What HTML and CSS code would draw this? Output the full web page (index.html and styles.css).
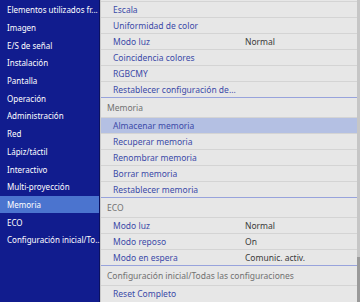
FILE: index.html
```html
<!DOCTYPE html>
<html lang="es">
<head>
<meta charset="utf-8">
<title>Menú</title>
<link rel="stylesheet" href="styles.css">
</head>
<body>
<div class="screen">
  <nav class="sidebar">
    <div class="nav-item">Elementos utilizados fr...</div>
    <div class="nav-item">Imagen</div>
    <div class="nav-item">E/S de señal</div>
    <div class="nav-item">Instalación</div>
    <div class="nav-item">Pantalla</div>
    <div class="nav-item">Operación</div>
    <div class="nav-item">Administración</div>
    <div class="nav-item">Red</div>
    <div class="nav-item">Lápiz/táctil</div>
    <div class="nav-item">Interactivo</div>
    <div class="nav-item">Multi-proyección</div>
    <div class="nav-item active">Memoria</div>
    <div class="nav-item">ECO</div>
    <div class="nav-item">Configuración inicial/To...</div>
  </nav>
  <main class="panel">
    <div class="row"><span class="label">Escala</span></div>
    <div class="row"><span class="label">Uniformidad de color</span></div>
    <div class="row"><span class="label">Modo luz</span><span class="value">Normal</span></div>
    <div class="row"><span class="label">Coincidencia colores</span></div>
    <div class="row"><span class="label">RGBCMY</span></div>
    <div class="row"><span class="label">Restablecer configuración de...</span></div>
    <div class="head">Memoria</div>
    <div class="row selected"><span class="label">Almacenar memoria</span></div>
    <div class="row"><span class="label">Recuperar memoria</span></div>
    <div class="row"><span class="label">Renombrar memoria</span></div>
    <div class="row"><span class="label">Borrar memoria</span></div>
    <div class="row"><span class="label">Restablecer memoria</span></div>
    <div class="head">ECO</div>
    <div class="row"><span class="label">Modo luz</span><span class="value">Normal</span></div>
    <div class="row"><span class="label">Modo reposo</span><span class="value">On</span></div>
    <div class="row"><span class="label">Modo en espera</span><span class="value">Comunic. activ.</span></div>
    <div class="head">Configuración inicial/Todas las configuraciones</div>
    <div class="row"><span class="label">Reset Completo</span></div>
  </main>
  <div class="scrollbar"><div class="thumb"></div></div>
</div>
</body>
</html>
```
FILE: styles.css
```css
html, body {
  margin: 0;
  padding: 0;
}
body {
  width: 360px;
  height: 302px;
  overflow: hidden;
  font-family: "Noto Sans", "Open Sans", sans-serif;
  font-size: 8.5px;
}
.screen {
  display: flex;
  width: 360px;
  height: 302px;
}
.sidebar {
  width: 100px;
  box-sizing: border-box;
  background: #111c8e;
  border-right: 1px solid #0b1160;
  padding-top: 1px;
  display: flex;
  flex-direction: column;
}
.nav-item {
  height: 17.7px;
  display: flex;
  align-items: center;
  padding-left: 7px;
  color: #ffffff;
  font-size: 8px;
  white-space: nowrap;
}
.nav-item.active {
  background: #4b74cf;
}
.panel {
  flex: 1;
  background: #e7e7e7;
  border-left: 1px solid #c9c9c9;
  padding-top: 1px;
  display: flex;
  flex-direction: column;
  overflow: hidden;
}
.row {
  height: 16px;
  box-sizing: border-box;
  border-top: 1px solid #d4d4d4;
  display: grid;
  grid-template-columns: 132px 1fr;
  align-items: center;
  padding-left: 12px;
  white-space: nowrap;
  flex-shrink: 0;
}
.row.selected {
  background: #b4c0e3;
}
.label {
  color: #3b4aa8;
}
.value {
  color: #3a3a3a;
}
.head {
  height: 20px;
  box-sizing: border-box;
  border-top: 1px solid #98a3dc;
  display: flex;
  align-items: center;
  padding-left: 6px;
  color: #717171;
  white-space: nowrap;
  flex-shrink: 0;
}
.scrollbar {
  width: 3px;
  background: #c6c6c6;
  display: flex;
  flex-direction: column;
  justify-content: flex-end;
}
.thumb {
  height: 45px;
  background: #9a9a9a;
}
```
